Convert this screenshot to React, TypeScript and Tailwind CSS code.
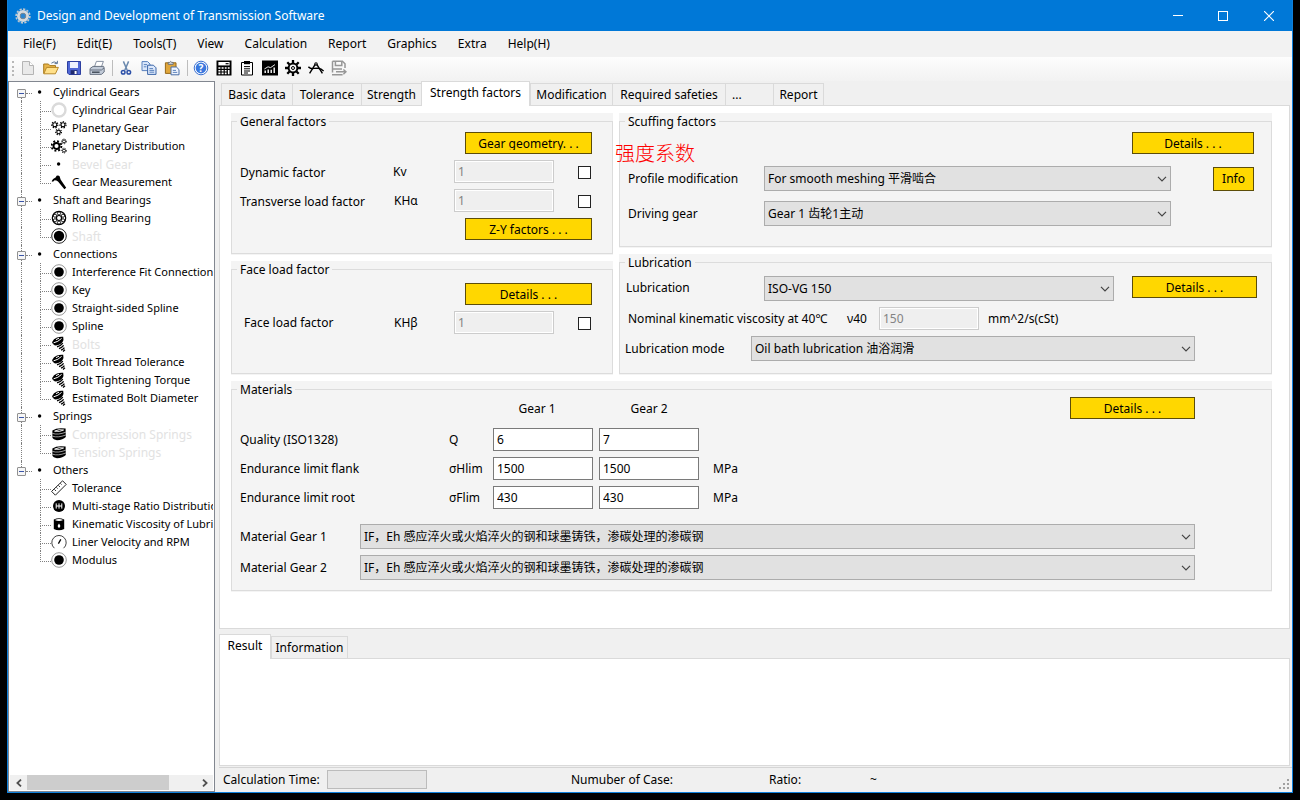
import React from "react";

type IconProps = { children: React.ReactNode };

function Icon({ children }: IconProps) {
  return (
    <svg viewBox="0 0 16 16" className="block h-4 w-4 shrink-0" fill="none" aria-hidden="true">
      {children}
    </svg>
  );
}

function Cog({ cx, cy, r, w, teeth }: { cx: number; cy: number; r: number; w: number; teeth: number }) {
  const step = (2 * Math.PI * (r + w)) / (teeth * 2);
  return (
    <g stroke="#000">
      <circle cx={cx} cy={cy} r={r} strokeWidth={w} />
      <circle cx={cx} cy={cy} r={r + w} strokeWidth={w} strokeDasharray={`${step} ${step}`} />
    </g>
  );
}

/* ---------- tree icons ---------- */

const bullet = (
  <Icon>
    <circle cx="7.6" cy="8" r="1.7" fill="#000" />
  </Icon>
);

const ring = (
  <Icon>
    <circle cx="8" cy="8" r="6.5" stroke="#dadada" strokeWidth="2.4" fill="#fff" />
  </Icon>
);

const planetary = (
  <Icon>
    <Cog cx={3.8} cy={4.8} r={2} w={1.1} teeth={7} />
    <Cog cx={12} cy={4.8} r={2} w={1.1} teeth={7} />
    <Cog cx={7.6} cy={12} r={1.8} w={1.1} teeth={7} />
  </Icon>
);

const distribution = (
  <Icon>
    <Cog cx={5.5} cy={8} r={3} w={1.9} teeth={8} />
    <Cog cx={13} cy={3.4} r={1.5} w={0.9} teeth={7} />
    <Cog cx={13} cy={12.6} r={1.5} w={0.9} teeth={7} />
  </Icon>
);

const hammer = (
  <Icon>
    <path d="M.6 7.2 Q1.6 4.6 4.6 3.4 L5.6 1.8 Q7.4 .8 8.6 2.2 L9.6 5.6 L15.2 13.8 L13.4 15.2 L7 7.6 L5.4 6.4 L3.6 6.2 L2 7.8 Z" fill="#000" />
  </Icon>
);

const bearing = (
  <Icon>
    <circle cx="8" cy="8" r="6.7" stroke="#000" strokeWidth="1.2" />
    <circle cx="8" cy="8" r="2.5" stroke="#000" strokeWidth="1.1" />
    <g stroke="#000" strokeWidth=".9">
      <circle cx="8" cy="3.4" r="1.6" />
      <circle cx="12" cy="5.7" r="1.6" />
      <circle cx="12" cy="10.3" r="1.6" />
      <circle cx="8" cy="12.6" r="1.6" />
      <circle cx="4" cy="10.3" r="1.6" />
      <circle cx="4" cy="5.7" r="1.6" />
    </g>
  </Icon>
);

const shaft = (
  <Icon>
    <circle cx="8" cy="8" r="7.3" stroke="#222" strokeWidth="1" />
    <circle cx="8" cy="8" r="5.2" fill="#000" />
  </Icon>
);

const disc = (
  <Icon>
    <circle cx="8" cy="8" r="7.3" stroke="#999" strokeWidth="1" />
    <circle cx="8" cy="8" r="4.8" fill="#000" />
  </Icon>
);

const bolt = (
  <Icon>
    <path d="M1 6.2 Q2.5 3 6 1.6 Q9 .4 12.2 .8 Q13 4 11.6 6 Q9 9.2 4 9.6 Q1.8 8.6 1 6.2Z" fill="#000" />
    <path d="M2.6 6.8 Q7 6 10.6 2.4 M5 3.6 L8 2.2" stroke="#fff" strokeWidth="1" />
    <path d="M6 10.8 Q10 9.8 11.8 7.2 M8 12.6 Q11 11.6 12.6 9.4 M10 14.2 Q12 13.4 13.4 11.6 M12 15.4 L14 13.8" stroke="#000" strokeWidth="1.3" />
  </Icon>
);

const spring = (
  <Icon>
    <path d="M1.4 4.6 Q6 1.2 14.6 2.6 L14.8 11 Q12 14 6 14.2 Q2.2 14 1.4 11.6 Z" fill="#000" />
    <path d="M3.6 5.2 Q8 2.8 12.6 4 Q9 6.2 3.6 5.2Z" stroke="#fff" strokeWidth=".9" />
    <path d="M1.4 7.4 Q7 9.2 14.8 6.2 M1.4 10.2 Q7 12 14.8 9" stroke="#fff" strokeWidth=".6" />
  </Icon>
);

const ruler = (
  <Icon>
    <path d="M.6 11.4 L11.6 .8 L15.2 4.4 L4.4 15.2 Z" stroke="#222" strokeWidth="1" fill="#fff" />
    <path d="M3.4 9.4 L5 11 M5.4 7.4 L6.6 8.6 M7.4 5.4 L9 7 M9.4 3.4 L10.6 4.6" stroke="#222" strokeWidth=".9" />
  </Icon>
);

const gearbox = (
  <Icon>
    <circle cx="8" cy="8" r="6" fill="#000" />
    <path d="M5.2 5.4 V10.6 M8 5.4 V10.6 M10.8 5.4 V10.6 M5.2 8 H10.8" stroke="#fff" strokeWidth="1" />
  </Icon>
);

const barrel = (
  <Icon>
    <path d="M2.8 3.6 Q8 1 13.2 3.6 V13 Q8 15.4 2.8 13 Z" fill="#000" />
    <path d="M3.8 4 Q8 2.2 12.2 4 Q8 5.8 3.8 4Z" fill="#fff" />
    <path d="M8 7.6 Q10.6 10.6 8 12 Q5.4 10.6 8 7.6Z" fill="#fff" />
  </Icon>
);

const gauge = (
  <Icon>
    <path d="M3.4 14.2 A7.2 7.2 0 1 1 12.6 14.2" stroke="#444" strokeWidth="1" />
    <path d="M7.4 9.6 L9.8 5.4" stroke="#000" strokeWidth="1.3" />
  </Icon>
);

/* ---------- toolbar icons ---------- */

const newDoc = (
  <Icon>
    <path d="M2.5 1.5 H9.5 L13.5 5.5 V14.5 H2.5 Z" fill="#e9e9e9" stroke="#b4b4b4" />
    <path d="M9.5 1.5 V5.5 H13.5" fill="#fff" stroke="#b4b4b4" />
  </Icon>
);

const openFolder = (
  <Icon>
    <path d="M.7 13.5 V4 H5.4 L6.8 5.6 H12.5 V8" fill="#e8b54a" stroke="#a87b1e" />
    <path d="M.8 13.8 L3.6 7.4 H15.4 L12.4 13.8 Z" fill="#ffe08a" stroke="#b8892a" />
    <path d="M8.4 3.2 Q11 .6 14 3 M14.4 .8 V3.6 H11.6" stroke="#5f7797" strokeWidth="1" />
  </Icon>
);

const save = (
  <Icon>
    <path d="M1.5 1.5 H14.5 V14.5 H3 L1.5 13 Z" fill="#5068d6" stroke="#2d3fa0" />
    <path d="M4 2 H12 V8 H4 Z" fill="#eef3ff" />
    <path d="M4.6 10.2 H11.4 V14.2 H4.6 Z" fill="#1f2a6e" />
    <path d="M8.6 11 H10.6 V14 H8.6 Z" fill="#fff" />
  </Icon>
);

const print = (
  <Icon>
    <path d="M5.4 7 L7.4 1.4 H14.4 L12.2 7.4 Z" fill="#fff" stroke="#7a8699" strokeWidth=".9" />
    <path d="M1 8.6 L4 6.4 H14.6 L15.2 8 V12 L12.4 14.4 H1 Z" fill="#c2cbd8" stroke="#5d6878" strokeWidth=".9" />
    <path d="M1.2 10 H12.4 L15 8" stroke="#5d6878" strokeWidth=".9" />
    <path d="M3 12.2 H10.6" stroke="#3d4653" strokeWidth="1.4" />
  </Icon>
);

const cut = (
  <Icon>
    <path d="M5.4 1.4 L9.2 10.2 M10.6 1.4 L6.8 10.2" stroke="#6a89ae" strokeWidth="1.5" />
    <circle cx="5.2" cy="12.2" r="1.8" stroke="#2c50a8" strokeWidth="1.5" />
    <circle cx="10.8" cy="12.2" r="1.8" stroke="#2c50a8" strokeWidth="1.5" />
  </Icon>
);

const copy = (
  <Icon>
    <path d="M1 1.6 H6.6 L9 4 V10.6 H1 Z" fill="#dce8fb" stroke="#5b82bd" />
    <path d="M6.6 5.2 H12.4 L15 7.8 V14.4 H6.6 Z" fill="#dce8fb" stroke="#3c66a8" />
    <path d="M2.8 4.6 H6 M2.8 6.8 H5.4 M8.4 8.6 H12 M8.4 10.4 H13.2 M8.4 12.2 H13.2" stroke="#4d77b5" strokeWidth=".9" />
  </Icon>
);

const paste = (
  <Icon>
    <path d="M1.4 2.8 H12 V13.4 H1.4 Z" fill="#e0a63a" stroke="#96691a" />
    <path d="M4.2 4.4 V2.4 H5.6 Q6.7 .4 7.8 2.4 H9.2 V4.4 Z" fill="#d0d4da" stroke="#5e6670" strokeWidth=".8" />
    <path d="M7 7 H12.4 L15 9.6 V14.8 H7 Z" fill="#eef4ff" stroke="#4a6ea6" />
    <path d="M8.8 10.4 H12 M8.8 12.4 H13.2" stroke="#4d77b5" strokeWidth=".9" />
  </Icon>
);

const help = (
  <Icon>
    <circle cx="8" cy="8" r="6.8" fill="#fff" stroke="#3a6fd0" strokeWidth="1" />
    <circle cx="8" cy="8" r="5.4" fill="#3a78de" />
    <text x="8" y="11.6" textAnchor="middle" fontSize="10" fontWeight="700" fill="#fff" fontFamily="Noto Sans, sans-serif">
      ?
    </text>
  </Icon>
);

const calculator = (
  <Icon>
    <path d="M.5 .5 H15.5 V15.5 H.5 Z" fill="#000" />
    <path d="M2.4 2 H13.6 V5.4 H2.4 Z" fill="#fff" />
    <path d="M9.6 3.7 H12.6" stroke="#000" strokeWidth="1.2" />
    <path
      d="M2.4 8 H4.4 M5.6 8 H7.6 M8.8 8 H10.6 M11.8 8 H13.6 M2.4 10.7 H4.4 M5.6 10.7 H7.6 M8.8 10.7 H10.6 M2.4 13.4 H4.4 M5.6 13.4 H7.6 M8.8 13.4 H10.6 M12.7 10 V14.2"
      stroke="#fff"
      strokeWidth="1.6"
    />
  </Icon>
);

const clipboard = (
  <Icon>
    <path d="M2.5 2.5 H13.5 V15 H2.5 Z" fill="#fff" stroke="#000" />
    <path d="M5 1 H11 V4.2 H5 Z" fill="#000" />
    <path d="M5 6.6 H11 M5 8.8 H11 M5 11 H11 M5 13 H9" stroke="#000" strokeWidth="1" />
  </Icon>
);

const chart = (
  <Icon>
    <path d="M0 .5 H16 V15.5 H0 Z" fill="#000" />
    <path d="M3.2 13 V10.6 M6.2 13 V9.4 M9.2 13 V9.8 M12.2 13 V7.6" stroke="#fff" strokeWidth="1.4" />
    <path d="M2.4 9 L6 6.8 L8.6 7.6 L13 4.6" stroke="#fff" strokeWidth=".9" />
  </Icon>
);

const settings = (
  <Icon>
    <circle cx="8" cy="8" r="4.4" stroke="#000" strokeWidth="2" />
    <path
      d="M8 0 V3 M8 13 V16 M0 8 H3 M13 8 H16 M2.3 2.3 L4.5 4.5 M11.5 11.5 L13.7 13.7 M13.7 2.3 L11.5 4.5 M4.5 11.5 L2.3 13.7"
      stroke="#000"
      strokeWidth="2.3"
    />
    <circle cx="8" cy="8" r="1.5" stroke="#000" strokeWidth="1" />
  </Icon>
);

const compass = (
  <Icon>
    <path d="M7.2 4.4 L1.6 13.4 M8.8 4.4 L14.4 13.4" stroke="#000" strokeWidth="1.4" />
    <circle cx="8" cy="4" r="1.2" stroke="#000" strokeWidth="1.1" />
    <path d="M.4 6.8 Q3 9.2 5.6 8.4 L10.2 8.2 Q13.4 8.6 15.6 11" stroke="#000" strokeWidth="1.4" />
  </Icon>
);

const saveAs = (
  <Icon>
    <path d="M1.5 1.3 H11.4 L14 3.8 V8 M1.5 1.3 V12.6" stroke="#979797" strokeWidth="1.5" />
    <path d="M4.4 1.4 V5.4 H10.8 V1.4 M1.4 9 H11" stroke="#979797" strokeWidth="1.5" />
    <path d="M5 11.8 H14.6 M12.4 9.4 L15 11.8 L12.4 14.2 M1 14.8 H11.6" stroke="#979797" strokeWidth="1.4" />
  </Icon>
);

const appGear = (
  <Icon>
    <circle cx="8" cy="8" r="4.4" stroke="#d5dade" strokeWidth="3.2" />
    <circle cx="8" cy="8" r="6.9" stroke="#c0c8ce" strokeWidth="1.6" strokeDasharray="2.2 1.4" />
    <circle cx="8" cy="8" r="2.8" stroke="#7b8992" strokeWidth="1" fill="#2a86d2" />
  </Icon>
);

/* ---------- navigation tree ---------- */

type Leaf = { label: string; icon: React.ReactNode; muted?: boolean };
type Branch = { label: string; items: Leaf[] };

const branches: Branch[] = [
  {
    label: "Cylindrical Gears",
    items: [
      { label: "Cylindrical Gear Pair", icon: ring },
      { label: "Planetary Gear", icon: planetary },
      { label: "Planetary Distribution", icon: distribution },
      { label: "Bevel Gear", icon: bullet, muted: true },
      { label: "Gear Measurement", icon: hammer },
    ],
  },
  {
    label: "Shaft and Bearings",
    items: [
      { label: "Rolling Bearing", icon: bearing },
      { label: "Shaft", icon: shaft, muted: true },
    ],
  },
  {
    label: "Connections",
    items: [
      { label: "Interference Fit Connection", icon: disc },
      { label: "Key", icon: disc },
      { label: "Straight-sided Spline", icon: disc },
      { label: "Spline", icon: disc },
      { label: "Bolts", icon: bolt, muted: true },
      { label: "Bolt Thread Tolerance", icon: bolt },
      { label: "Bolt Tightening Torque", icon: bolt },
      { label: "Estimated Bolt Diameter", icon: bolt },
    ],
  },
  {
    label: "Springs",
    items: [
      { label: "Compression Springs", icon: spring, muted: true },
      { label: "Tension Springs", icon: spring, muted: true },
    ],
  },
  {
    label: "Others",
    items: [
      { label: "Tolerance", icon: ruler },
      { label: "Multi-stage Ratio Distribution", icon: gearbox },
      { label: "Kinematic Viscosity of Lubricants", icon: barrel },
      { label: "Liner Velocity and RPM", icon: gauge },
      { label: "Modulus", icon: disc },
    ],
  },
];

function Tree() {
  return (
    <ul className="mr-px min-h-0 flex-1 overflow-hidden pt-px text-[11px] leading-[18px] whitespace-nowrap">
      {branches.map((branch, b) => {
        const first = b === 0;
        const last = b === branches.length - 1;
        return (
          <li key={branch.label}>
            <div className="flex h-[18px] items-center pl-2">
              <div className="flex h-full w-[9px] flex-col items-center">
                <span className={first ? "h-[6px]" : "h-[6px] border-l border-dotted border-[#808080]"} />
                <button
                  aria-label={`Collapse ${branch.label}`}
                  className="flex h-[9px] w-[9px] items-center justify-center rounded-[1px] border border-[#919191] bg-[#f6f6f6]"
                >
                  <span className="h-px w-[5px] bg-[#3a55a8]" />
                </button>
                <span className={last ? "flex-1" : "flex-1 border-l border-dotted border-[#808080]"} />
              </div>
              <span className="mt-[3px] w-[6px] border-t border-dotted border-[#808080]" />
              <span className="mr-[5px]">{bullet}</span>
              <button>{branch.label}</button>
            </div>
            <ul>
              {branch.items.map((item, i) => (
                <li key={item.label} className="flex h-[18px] items-center pl-3">
                  <span
                    className={
                      last ? "h-full w-[19px] shrink-0" : "h-full w-[19px] shrink-0 border-l border-dotted border-[#808080]"
                    }
                  />
                  <span className="flex h-full w-[11px] shrink-0 flex-col">
                    <span className="h-[11px] border-b border-l border-dotted border-[#808080]" />
                    <span
                      className={
                        i === branch.items.length - 1 ? "flex-1" : "flex-1 border-l border-dotted border-[#808080]"
                      }
                    />
                  </span>
                  {item.icon}
                  <button className={item.muted ? "ml-[5px] pt-px text-[12px] text-[#e2e2e2]" : "ml-[5px]"}>
                    {item.label}
                  </button>
                </li>
              ))}
            </ul>
          </li>
        );
      })}
    </ul>
  );
}

/* ---------- form controls ---------- */

function Group({
  title,
  className = "",
  children,
}: {
  title: string;
  className?: string;
  children: React.ReactNode;
}) {
  return (
    <div className="bg-[#f4f4f4] pb-px">
      <fieldset className={`min-w-0 border border-[#dcdcdc] ${className}`}>
        <legend className="ml-[5px] h-4 px-[3px] pt-px leading-4">{title}</legend>
        {children}
      </fieldset>
    </div>
  );
}

function GoldButton({ className, clip, children }: { className: string; clip?: boolean; children: React.ReactNode }) {
  return (
    <button className={`flex shrink-0 justify-center border border-[#5c4d08] bg-[#ffd700] pt-[3px] ${className}`}>
      <span className={clip ? "h-[14px] overflow-hidden leading-4" : "leading-4"}>{children}</span>
    </button>
  );
}

function LockedField({ id, value }: { id: string; value: string }) {
  return (
    <input
      id={id}
      disabled
      defaultValue={value}
      className="h-[23px] w-[100px] border border-[#cccccc] bg-[#efefef] px-[3px] text-[#838383] outline-1 -outline-offset-2 outline-white"
    />
  );
}

function Field({ label, value }: { label: string; value: string }) {
  return (
    <input
      aria-label={label}
      defaultValue={value}
      className="h-[23px] w-[100px] border border-[#7a7a7a] bg-white px-[3px]"
    />
  );
}

function Tick({ label }: { label: string }) {
  return (
    <input
      type="checkbox"
      aria-label={label}
      className="mt-px mr-px ml-auto block h-[13px] w-[13px] appearance-none border border-[#222222] bg-white checked:bg-[#222222]"
    />
  );
}

function Combo({ id, value, className }: { id: string; value: string; className: string }) {
  return (
    <div className={`relative h-[25px] ${className}`}>
      <select
        id={id}
        className="block h-full w-full appearance-none border border-[#acacac] bg-[#e1e1e1] pl-[3px] pr-6"
      >
        <option>{value}</option>
      </select>
      <svg viewBox="0 0 10 6" className="pointer-events-none absolute top-[10px] right-1 h-[6px] w-[10px]" fill="none">
        <path d="M1 .8 L5 4.8 L9 .8" stroke="#444" strokeWidth="1.2" />
      </svg>
    </div>
  );
}

function Tab({ active, className, children }: { active?: boolean; className: string; children: React.ReactNode }) {
  return (
    <button
      role="tab"
      aria-selected={!!active}
      className={
        active
          ? `relative -mb-px h-[25px] border border-b-0 border-[#dadada] bg-white pb-[2px] whitespace-nowrap ${className}`
          : `-mr-px h-[22px] border border-b-0 border-[#dadada] bg-[#f0f0f0] whitespace-nowrap ${className}`
      }
    >
      {children}
    </button>
  );
}

/* ---------- window ---------- */

const menus = ["File(F)", "Edit(E)", "Tools(T)", "View", "Calculation", "Report", "Graphics", "Extra", "Help(H)"];

const toolGroups: { name: string; icon: React.ReactNode }[][] = [
  [
    { name: "New", icon: newDoc },
    { name: "Open", icon: openFolder },
    { name: "Save", icon: save },
    { name: "Print", icon: print },
  ],
  [
    { name: "Cut", icon: cut },
    { name: "Copy", icon: copy },
    { name: "Paste", icon: paste },
  ],
  [
    { name: "Help", icon: help },
    { name: "Calculate", icon: calculator },
    { name: "Report", icon: clipboard },
    { name: "Graphics", icon: chart },
    { name: "Settings", icon: settings },
    { name: "Drafting", icon: compass },
    { name: "Save as", icon: saveAs },
  ],
];

function TitleBar() {
  return (
    <header className="flex h-[31px] shrink-0 items-center bg-[#0078d7] pl-[7px] text-white">
      {appGear}
      <h1 className="ml-[6px] flex-1 text-[12px]">Design and Development of Transmission Software</h1>
      <button aria-label="Minimize" className="flex h-full w-[45px] items-center justify-center">
        <span className="h-px w-[10px] bg-white" />
      </button>
      <button aria-label="Maximize" className="flex h-full w-[45px] items-center justify-center">
        <span className="h-[10px] w-[10px] border border-white" />
      </button>
      <button aria-label="Close" className="flex h-full w-[47px] items-center justify-center">
        <svg viewBox="0 0 10 10" className="h-[10px] w-[10px]" fill="none">
          <path d="M0 0 L10 10 M10 0 L0 10" stroke="#fff" strokeWidth="1.1" />
        </svg>
      </button>
    </header>
  );
}

function Toolbar() {
  return (
    <div className="flex h-6 shrink-0 items-center bg-linear-to-b from-[#fdfdfd] to-[#f2f2f2] pb-[2px] pl-1">
      <span className="mr-[2px] h-[15px] border-l-2 border-dotted border-[#b8b8b8]" />
      {toolGroups.map((group, g) => (
        <div key={g} className="flex items-center">
          {g > 0 && <span className="mr-px ml-1 h-4 w-px bg-[#bdbdbd]" />}
          {group.map((tool) => (
            <button key={tool.name} aria-label={tool.name} className="flex h-[22px] w-[23px] items-center justify-center">
              {tool.icon}
            </button>
          ))}
        </div>
      ))}
    </div>
  );
}

function Sidebar() {
  return (
    <nav className="flex w-[207px] shrink-0 flex-col border border-[#828790] bg-white">
      <Tree />
      <div className="m-px flex h-[15px] shrink-0 bg-[#f0f0f0]">
        <button aria-label="Scroll left" className="flex w-[17px] items-center justify-center">
          <svg viewBox="0 0 6 8" className="h-2 w-[6px]" fill="none">
            <path d="M5 .6 L1.4 4 L5 7.4" stroke="#505050" strokeWidth="1.8" />
          </svg>
        </button>
        <div className="flex-1">
          <div className="h-full w-[84%] bg-[#cdcdcd]" />
        </div>
        <button aria-label="Scroll right" className="flex w-[17px] items-center justify-center">
          <svg viewBox="0 0 6 8" className="h-2 w-[6px]" fill="none">
            <path d="M1 .6 L4.6 4 L1 7.4" stroke="#505050" strokeWidth="1.8" />
          </svg>
        </button>
      </div>
    </nav>
  );
}

function GeneralFactors() {
  return (
    <Group title="General factors" className="pb-[13px]">
      <div className="flex flex-col gap-[6px] pt-[3px] pr-5 pl-2">
        <GoldButton clip className="h-[22px] w-[127px] self-end">
          Gear geometry. . .
        </GoldButton>
        <div className="grid grid-cols-[153px_61px_100px_1fr] items-center">
          <label htmlFor="kv" className="pt-[2px]">
            Dynamic factor
          </label>
          <span>Kv</span>
          <LockedField id="kv" value="1" />
          <Tick label="Set dynamic factor" />
        </div>
        <div className="grid grid-cols-[153px_61px_100px_1fr] items-center">
          <label htmlFor="kha" className="pt-[2px]">
            Transverse load factor
          </label>
          <span className="pl-px">KHα</span>
          <LockedField id="kha" value="1" />
          <Tick label="Set transverse load factor" />
        </div>
        <GoldButton className="h-[22px] w-[127px] self-end">Z-Y factors . . .</GoldButton>
      </div>
    </Group>
  );
}

function FaceLoadFactor() {
  return (
    <Group title="Face load factor" className="pb-[39px]">
      <div className="flex flex-col gap-[6px] pt-[6px] pr-5 pl-2">
        <GoldButton className="h-[22px] w-[127px] self-end">Details . . .</GoldButton>
        <div className="grid grid-cols-[153px_61px_100px_1fr] items-center">
          <label htmlFor="khb" className="pl-1">
            Face load factor
          </label>
          <span className="pl-px">KHβ</span>
          <LockedField id="khb" value="1" />
          <Tick label="Set face load factor" />
        </div>
      </div>
    </Group>
  );
}

function ScuffingFactors() {
  return (
    <div className="relative">
      <Group title="Scuffing factors" className="pb-5">
        <div className="flex flex-col pt-[3px] pr-[17px] pl-2">
          <GoldButton className="h-[22px] w-[122px] self-end">Details . . .</GoldButton>
          <div className="mt-3 flex items-center">
            <label htmlFor="profile" className="w-[136px] shrink-0">
              Profile modification
            </label>
            <Combo id="profile" value="For smooth meshing 平滑啮合" className="mr-[42px] flex-1" />
            <GoldButton className="h-6 w-[41px]">Info</GoldButton>
          </div>
          <div className="mt-[10px] mr-[83px] flex items-center">
            <label htmlFor="driving" className="w-[136px] shrink-0">
              Driving gear
            </label>
            <Combo id="driving" value="Gear 1 齿轮1主动" className="flex-1" />
          </div>
        </div>
      </Group>
      <p className="absolute top-[26px] left-[-4px] font-['Noto_Sans_CJK_SC',sans-serif] text-[20px] leading-7 font-light text-[#ff0000]">
        强度系数
      </p>
    </div>
  );
}

function Lubrication() {
  return (
    <Group title="Lubrication" className="pb-3">
      <div className="flex flex-col gap-[6px] pt-[6px]">
        <div className="flex items-start pr-[14px] pl-[6px]">
          <label htmlFor="oil" className="w-[138px] shrink-0 leading-6">
            Lubrication
          </label>
          <Combo id="oil" value="ISO-VG 150" className="mr-[18px] flex-1" />
          <GoldButton className="h-[22px] w-[125px]">Details . . .</GoldButton>
        </div>
        <div className="flex items-center pl-2">
          <label htmlFor="nu40" className="w-[219px] shrink-0">
            Nominal kinematic viscosity at 40℃
          </label>
          <span className="w-8 shrink-0">ν40</span>
          <LockedField id="nu40" value="150" />
          <span className="ml-[9px]">mm^2/s(cSt)</span>
        </div>
        <div className="flex items-center pr-[76px] pl-[5px]">
          <label htmlFor="oilmode" className="w-[126px] shrink-0">
            Lubrication mode
          </label>
          <Combo id="oilmode" value="Oil bath lubrication 油浴润滑" className="flex-1" />
        </div>
      </div>
    </Group>
  );
}

const materialRows = [
  { label: "Quality (ISO1328)", symbol: "Q", gear1: "6", gear2: "7", unit: "" },
  { label: "Endurance limit flank", symbol: "σHlim", gear1: "1500", gear2: "1500", unit: "MPa" },
  { label: "Endurance limit root", symbol: "σFlim", gear1: "430", gear2: "430", unit: "MPa" },
];

const steel = "IF，Eh 感应淬火或火焰淬火的钢和球墨铸铁，渗碳处理的渗碳钢";

function Materials() {
  return (
    <Group title="Materials" className="pb-[10px]">
      <div className="pr-[76px] pl-2">
        <div className="grid h-[22px] grid-cols-[253px_88px_18px_100px_1fr] items-center">
          <span />
          <span className="pt-[2px] text-center">Gear 1</span>
          <span />
          <span className="pt-[2px] text-center">Gear 2</span>
          <GoldButton className="h-[22px] w-[125px] justify-self-end">Details . . .</GoldButton>
        </div>
        <div className="mt-[9px] flex flex-col gap-[6px]">
          {materialRows.map((row) => (
            <div key={row.label} className="grid grid-cols-[209px_44px_100px_100px_1fr] items-center">
              <span>{row.label}</span>
              <span>{row.symbol}</span>
              <Field label={`${row.label}, gear 1`} value={row.gear1} />
              <span className="pl-[6px]">
                <Field label={`${row.label}, gear 2`} value={row.gear2} />
              </span>
              <span className="pl-5">{row.unit}</span>
            </div>
          ))}
        </div>
        <div className="mt-[15px] flex flex-col gap-[6px]">
          <div className="flex items-center">
            <label htmlFor="mat1" className="w-[120px] shrink-0">
              Material Gear 1
            </label>
            <Combo id="mat1" value={steel} className="flex-1" />
          </div>
          <div className="flex items-center">
            <label htmlFor="mat2" className="w-[120px] shrink-0">
              Material Gear 2
            </label>
            <Combo id="mat2" value={steel} className="flex-1" />
          </div>
        </div>
      </div>
    </Group>
  );
}

export default function App() {
  return (
    <div className="flex h-screen flex-col bg-black px-[7px] pb-[7px] font-['Noto_Sans','Noto_Sans_CJK_SC',sans-serif] text-[12px] leading-4 text-black">
      <div className="flex min-h-0 flex-1 flex-col border border-t-0 border-[#0f80da] bg-[#f0f0f0]">
        <TitleBar />
        <nav className="flex h-[26px] shrink-0 items-center gap-[21px] bg-[#f2f2f2] pl-[15px]">
          {menus.map((menu) => (
            <button key={menu}>{menu}</button>
          ))}
        </nav>
        <Toolbar />
        <div className="flex min-h-0 flex-1">
          <Sidebar />
          <main className="flex min-w-0 flex-1 flex-col pl-1">
            <div role="tablist" className="flex h-6 shrink-0 items-end pl-[2px]">
              <Tab className="w-[72px]">Basic data</Tab>
              <Tab className="w-[70px]">Tolerance</Tab>
              <Tab className="w-[61px]">Strength</Tab>
              <Tab active className="w-[109px]">
                Strength factors
              </Tab>
              <Tab className="w-[83px]">Modification</Tab>
              <Tab className="w-[114px]">Required safeties</Tab>
              <Tab className="w-[49px] pl-[6px] text-left">...</Tab>
              <Tab className="w-[51px]">Report</Tab>
            </div>
            <section className="mr-[2px] flex flex-1 flex-col gap-[6px] border border-[#dadada] bg-white pt-[7px] pr-[17px] pl-[11px]">
              <div className="grid grid-cols-[382fr_653fr] gap-[6px]">
                <div className="flex flex-col gap-[6px]">
                  <GeneralFactors />
                  <FaceLoadFactor />
                </div>
                <div className="flex flex-col gap-[6px]">
                  <ScuffingFactors />
                  <Lubrication />
                </div>
              </div>
              <Materials />
            </section>
            <div role="tablist" className="mt-[5px] flex h-6 shrink-0 items-end">
              <Tab active className="w-[52px]">
                Result
              </Tab>
              <Tab className="w-[77px]">Information</Tab>
            </div>
            <section className="mr-[2px] h-[108px] shrink-0 border border-[#dadada] bg-white" />
            <footer className="mt-px flex h-[25px] shrink-0 items-center border-t border-[#d5d5d5] pl-1">
              <div className="flex w-[348px] items-center gap-[7px]">
                <span>Calculation Time:</span>
                <span className="mb-px h-[19px] w-[100px] border border-[#bcbcbc] bg-[#e6e6e6]" />
              </div>
              <span className="w-[198px]">Numuber of Case:</span>
              <span className="w-[101px]">Ratio:</span>
              <span>~</span>
              <svg viewBox="0 0 12 12" className="mr-px mb-px ml-auto h-3 w-3 self-end" fill="#a0a0a0">
                <path d="M8 0h2v2h-2z M4 4h2v2h-2z M8 4h2v2h-2z M0 8h2v2h-2z M4 8h2v2h-2z M8 8h2v2h-2z" />
              </svg>
            </footer>
          </main>
        </div>
      </div>
    </div>
  );
}
